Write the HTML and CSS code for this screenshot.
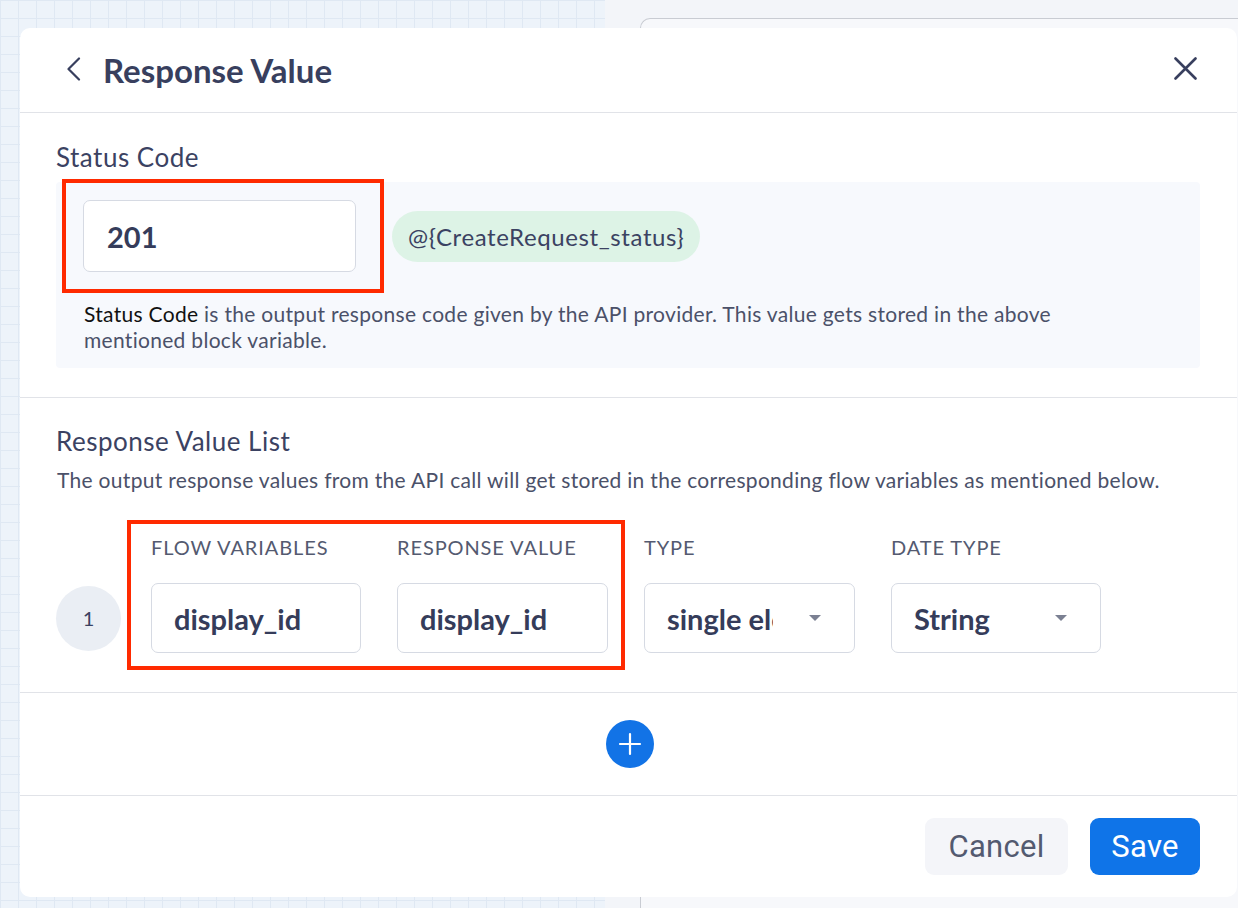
FILE: index.html
```html
<!DOCTYPE html>
<html>
    <head>
        <title>Response Value</title>
        <link rel="stylesheet" href="styles.css">
    </head>
    <body>
        <div class="backdrop">
            <div class="canvas-grid"></div>
            <div class="side-pane"><div class="side-card"></div></div>
        </div>

        <div class="modal">
            <div class="modal-header">
                <svg class="back-icon" width="16" height="24" viewBox="0 0 16 24">
                    <path d="M13 1.5 L2.5 12 L13 22.5" fill="none" stroke="#383f5e" stroke-width="2.2" stroke-linecap="round" stroke-linejoin="round"/>
                </svg>
                <h1>Response Value</h1>
                <svg class="close-icon" width="23" height="23" viewBox="0 0 23 23">
                    <path d="M1.5 1.5 L21.5 21.5 M21.5 1.5 L1.5 21.5" fill="none" stroke="#383f5e" stroke-width="2.6" stroke-linecap="round"/>
                </svg>
            </div>

            <div class="section">
                <h2>Status Code</h2>
                <div class="status-panel">
                    <div class="status-row">
                        <div class="field status-field">201</div>
                        <span class="chip">@{CreateRequest_status}</span>
                    </div>
                    <p class="status-note"><span class="strong">Status Code</span> is the output response code given by the API provider. This value gets stored in the above mentioned block variable.</p>
                    <div class="annotation annotation-status"></div>
                </div>
            </div>

            <div class="section">
                <h2>Response Value List</h2>
                <p class="hint">The output response values from the API call will get stored in the corresponding flow variables as mentioned below.</p>
                <div class="value-table">
                    <span></span>
                    <span class="col-label">FLOW VARIABLES</span>
                    <span class="col-label">RESPONSE VALUE</span>
                    <span class="col-label">TYPE</span>
                    <span class="col-label">DATE TYPE</span>

                    <span class="row-index">1</span>
                    <div class="field">display_id</div>
                    <div class="field">display_id</div>
                    <div class="field select"><span class="select-text">single element</span><span class="caret"></span></div>
                    <div class="field select"><span class="select-text">String</span><span class="caret"></span></div>

                    <div class="annotation annotation-row"></div>
                </div>
            </div>

            <div class="add-row">
                <button class="add-btn">
                    <svg width="24" height="24" viewBox="0 0 24 24">
                        <path d="M12 2 V22 M2 12 H22" stroke="#fff" stroke-width="2.2" stroke-linecap="round"/>
                    </svg>
                </button>
            </div>

            <div class="modal-footer">
                <button class="btn btn-cancel">Cancel</button>
                <button class="btn btn-save">Save</button>
            </div>
        </div>
    </body>
</html>
```

FILE: styles.css
```css
html, body {
    margin: 0;
    height: 100%;
    overflow: hidden;
}
body {
    font-family: Lato, "Noto Sans", sans-serif;
    color: #383f5e;
}
.backdrop {
    display: flex;
    height: 100%;
}
.canvas-grid {
    width: 605px;
    background-color: #edf3fa;
    background-image:
        linear-gradient(to right, #dfe8f3 1px, transparent 1px),
        linear-gradient(to bottom, #dfe8f3 1px, transparent 1px);
    background-size: 18px 18px;
}
.side-pane {
    flex: 1;
    background: #f3f5f9;
    padding: 18px 0 0 35px;
}
.side-card {
    height: 100%;
    border: 1px solid #c9ccd3;
    border-right: none;
    border-radius: 10px 0 0 0;
    background: #f7f8fb;
}

.modal {
    position: absolute;
    left: 20px;
    top: 28px;
    width: 1217px;
    height: 869px;
    background: #fff;
    border-radius: 10px;
    display: flex;
    flex-direction: column;
}
.modal-header {
    display: flex;
    align-items: center;
    height: 84px;
    padding: 0 40px 0 46px;
    border-bottom: 1px solid #e1e3e8;
}
.modal-header h1 {
    margin: 0 0 0 21px;
    font-size: 33px;
    font-weight: 700;
    flex: 1;
}
.back-icon { margin-top: -2px; }
.close-icon { margin-top: -4px; }

.section {
    padding: 29px 37px 29px 36px;
    border-bottom: 1px solid #e1e3e8;
}
.section h2 {
    margin: 0;
    font-size: 26px;
    font-weight: 400;
    line-height: 30px;
    letter-spacing: 0.5px;
    color: #3b4262;
}
.section + .section {
    padding-top: 28px;
}
.status-panel {
    position: relative;
    margin-top: 10px;
    background: #f7f9fd;
    border-radius: 4px;
    padding: 18px 27px 15px 27px;
}
.status-row {
    display: flex;
    align-items: center;
    gap: 36px;
}
.field {
    box-sizing: border-box;
    height: 70px;
    border: 1px solid #d6dae3;
    border-radius: 7px;
    background: #fff;
    padding: 0 22px;
    display: flex;
    align-items: center;
    font-size: 29px;
    font-weight: 700;
    color: #353c5a;
}
.status-row .status-field {
    width: 273px;
    height: 72px;
    padding-left: 23px;
}
.chip {
    background: #ddf3e6;
    border-radius: 26px;
    padding: 0 16px;
    height: 51px;
    line-height: 51px;
    font-size: 24px;
    letter-spacing: 0.6px;
    color: #3b4262;
}
.status-note {
    margin: 29px 0 0 1px;
    max-width: 1000px;
    font-size: 21px;
    line-height: 26px;
    letter-spacing: 0.3px;
    color: #4b5169;
}
.strong { color: #111; }

.hint {
    margin: 11px 0 0 1px;
    font-size: 21px;
    line-height: 26px;
    letter-spacing: 0.3px;
    color: #4b5169;
}
.value-table {
    position: relative;
    display: grid;
    grid-template-columns: 59px 210px 211px 211px 210px;
    column-gap: 36px;
    row-gap: 24px;
    align-items: center;
    margin-top: 42px;
    margin-bottom: 10px;
}
.col-label {
    font-size: 20px;
    line-height: 24px;
    letter-spacing: 0.9px;
    color: #545a70;
}
.row-index {
    width: 65px;
    height: 65px;
    border-radius: 50%;
    background: #eaeef4;
    display: flex;
    align-items: center;
    justify-content: center;
    font-size: 20px;
    color: #3b4262;
}
.select {
    padding-right: 33px;
}
.select-text {
    max-width: 106px;
    overflow: hidden;
    white-space: nowrap;
}
.caret {
    width: 0;
    height: 0;
    border-left: 6px solid transparent;
    border-right: 6px solid transparent;
    border-top: 6px solid #7b8092;
    margin-left: auto;
    flex-shrink: 0;
}

.annotation {
    position: absolute;
    border: 4px solid #ff2a00;
    pointer-events: none;
}
.annotation-status {
    left: 6px;
    top: -3px;
    width: 314px;
    height: 106px;
}
.annotation-row {
    left: 71px;
    top: -15px;
    width: 490px;
    height: 142px;
}

.add-row {
    display: flex;
    justify-content: center;
    padding: 27px 0;
    border-bottom: 1px solid #e1e3e8;
}
.add-btn {
    width: 48px;
    height: 48px;
    border-radius: 50%;
    border: none;
    background: #1273e6;
    display: flex;
    align-items: center;
    justify-content: center;
    padding: 0;
    margin-left: 2px;
}

.modal-footer {
    display: flex;
    justify-content: flex-end;
    gap: 22px;
    padding: 22px 37px 0 0;
}
.btn {
    height: 57px;
    border: none;
    border-radius: 9px;
    font-family: Roboto, "Liberation Sans", sans-serif;
    font-size: 31px;
    letter-spacing: 0.3px;
    padding: 0;
}
.btn-cancel {
    width: 143px;
    background: #f4f5f9;
    color: #535a70;
}
.btn-save {
    width: 110px;
    background: #0f74e8;
    color: #fff;
}
```
